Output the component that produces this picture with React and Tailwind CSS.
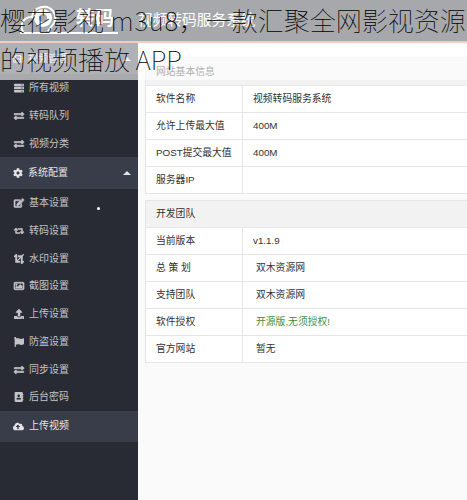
import React from "react";
import {
  FaServer, FaExchangeAlt, FaCog, FaEdit, FaRetweet, FaCrop, FaRegImage,
  FaUpload, FaFlag, FaAddressBook, FaCloudUploadAlt, FaFilm,
} from "react-icons/fa";

const videoMenu = [
  { icon: FaServer, label: "所有视频" },
  { icon: FaExchangeAlt, label: "转码队列", bold: true },
  { icon: FaExchangeAlt, label: "视频分类", bold: true },
];

const configMenu = [
  { icon: FaEdit, label: "基本设置", bold: true },
  { icon: FaRetweet, label: "转码设置", bold: true },
  { icon: FaCrop, label: "水印设置" },
  { icon: FaRegImage, label: "截图设置", bold: true },
  { icon: FaUpload, label: "上传设置" },
  { icon: FaFlag, label: "防盗设置" },
  { icon: FaExchangeAlt, label: "同步设置", bold: true },
  { icon: FaAddressBook, label: "后台密码" },
];

const siteRows = [
  ["软件名称", "视频转码服务系统"],
  ["允许上传最大值", "400M"],
  ["POST提交最大值", "400M"],
  ["服务器IP", ""],
];

const teamRows = [
  ["当前版本", "v1.1.9"],
  ["总 策 划", "双木资源网", "pl-[13px]"],
  ["支持团队", "双木资源网", "pl-[13px]"],
  ["软件授权", "开源版,无须授权!", "pl-[13px] text-[#3f8f3f]"],
  ["官方网站", "暂无", "pl-[13px]"],
];

function MenuItem({ icon: Icon, label, bold }) {
  return (
    <li className="flex h-[27.7px] items-center gap-[5px] pl-[14px] pt-px text-[#c3c4c8]">
      <Icon size={10} className={bold ? "overflow-visible stroke-current stroke-[34px]" : ""} />
      <span>{label}</span>
    </li>
  );
}

function MenuHead({ icon: Icon, label, className, arrow, size = 10 }) {
  return (
    <div className={"flex items-center gap-[5px] bg-[#393d49] pl-[13px] pr-[7px] text-[#e4e4e7] " + className}>
      <Icon size={size} />
      <span>{label}</span>
      {arrow && <span className="ml-auto border-x-4 border-b-4 border-x-transparent border-b-[#e4e4e7]" />}
    </div>
  );
}

function InfoTable({ title, rows, className, headClass }) {
  return (
    <section className={"border-l border-t border-[#e5e5e5] bg-white text-[9.8px] " + className}>
      <h2 className={"flex items-center border-b border-[#e8e8e8] bg-[#f2f2f2] pl-[10px] " + headClass}>{title}</h2>
      {rows.map(([name, value, style]) => (
        <div key={name} className="flex h-[27px] items-center border-b border-[#e6e6e6]">
          <div className="flex h-full w-[97px] items-center whitespace-pre border-r border-[#e6e6e6] pl-[10px]">{name}</div>
          <div className={style || "pl-[10px]"}>{value}</div>
        </div>
      ))}
    </section>
  );
}

export default function App() {
  return (
    <div className="relative h-[500px] w-[467px] overflow-hidden whitespace-nowrap bg-[#fafafa] font-['Liberation_Sans','Noto_Sans_CJK_SC',sans-serif] text-[10px] leading-none text-[#333]">
      <header className="flex h-[43px] items-center border-b-2 border-[#d58468] bg-[#23262e] text-white">
        <div className="mt-[-2px] ml-[20px] flex h-[29px] w-[98px] shrink-0 items-center border-b-2 border-white">
          <svg width="56" height="28" viewBox="0 0 56 28">
            <path d="M3 27C-1 19 4 12 12 12C13 2 27-2 33 6C36 10 36 14 34 18L28 26" fill="none" stroke="currentColor" strokeWidth="2" />
            <circle cx="23" cy="13" r="9" fill="currentColor" />
            <circle cx="23" cy="13" r="4" fill="#23262e" />
          </svg>
          <span className="text-[19px] font-bold">转码</span>
        </div>
        <h1 className="ml-[20px] text-[14.7px]">视频转码服务系统</h1>
      </header>
      <div className="flex h-[457px]">
        <nav className="w-[138px] shrink-0 bg-[#282b33]">
          <MenuHead icon={FaFilm} label="视频管理" className="h-[31px]" arrow />
          <ul>{videoMenu.map((m) => <MenuItem key={m.label} {...m} />)}</ul>
          <MenuHead icon={FaCog} label="系统配置" className="h-[32px]" arrow />
          <ul>{configMenu.map((m) => <MenuItem key={m.label} {...m} />)}</ul>
          <MenuHead icon={FaCloudUploadAlt} label="上传视频" className="h-[31px]" size={11} />
        </nav>
        <main className="flex-1 pl-[7px]">
          <div className="-ml-[7px] h-[14px] bg-white" />
          <InfoTable title="网站基本信息" rows={siteRows} headClass="h-[28px]" />
          <InfoTable title="开发团队" rows={teamRows} className="mt-[6px]" headClass="h-[27px]" />
        </main>
      </div>
      <span className="absolute left-[97px] top-[207px] size-[3px] rounded-full bg-white" />
      {/* caption strip over the top of the page */}
      <div className="absolute inset-x-0 top-0 h-[80px] whitespace-normal bg-white/60 font-['Noto_Sans_CJK_SC',sans-serif] text-[26px] font-thin leading-[39px] text-black">
        <p className="w-[480px]">
          樱花影视<span className="tracking-[0.8px]"> m3u8，</span>一款汇聚全网影视资源
          <br />
          的视频播放 APP
        </p>
      </div>
    </div>
  );
}
